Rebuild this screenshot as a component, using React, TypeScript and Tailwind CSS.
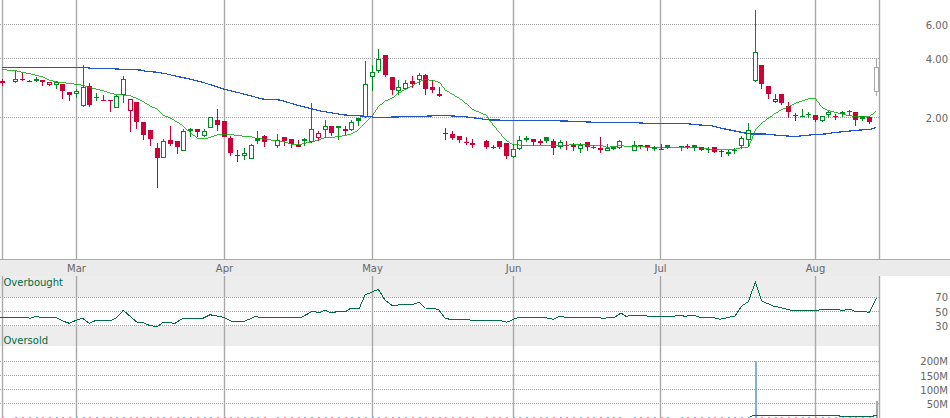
type CandleKind = 'g' | 'f' | 'r' | 'p' | 'x';
type Row = [number, number, number, number, number, CandleKind];
type Pt = [number, number];

// all numbers read off 3x crops, so each block carries its crop offset
const fromCrop = (rows: Row[], ox: number, oy: number): Row[] =>
  rows.map(([x, a, b, c, d, k]) => [x / 3 + ox, a / 3 + oy, b / 3 + oy, c / 3 + oy, d / 3 + oy, k]);
const line = (pts: Pt[], ox: number, oy: number): Pt[] => pts.map(([x, y]) => [x / 3 + ox, y / 3 + oy]);
const toPoints = (pts: Pt[]) => pts.map(([x, y]) => `${x.toFixed(1)},${y.toFixed(1)}`).join(' ');

const candles: Row[] = [
  ...fromCrop(
    [
      [7, 236, 258, 243, 248, 'r'], [46, 212, 248, 238, 245, 'g'], [68, 218, 243, 237, 240, 'r'], [89, 240, 246, 243, 245, 'r'],
      [109, 232, 246, 237, 243, 'f'], [127, 240, 258, 240, 246, 'r'], [148, 247, 258, 247, 254, 'p'], [169, 243, 267, 247, 254, 'g'],
      [187, 252, 297, 252, 273, 'r'], [208, 276, 303, 276, 285, 'r'], [229, 268, 295, 274, 281, 'g'], [250, 195, 320, 262, 317, 'g'],
      [268, 250, 321, 259, 315, 'r'], [290, 279, 303, 291, 294, 'f'], [311, 285, 303, 300, 303, 'r'], [331, 300, 336, 300, 303, 'r'],
      [349, 285, 324, 289, 323, 'g'], [370, 228, 309, 238, 285, 'g'], [391, 298, 396, 298, 332, 'p'], [409, 306, 387, 306, 366, 'r'],
      [430, 366, 420, 366, 405, 'r'], [451, 390, 438, 390, 417, 'r'], [472, 430, 564, 444, 474, 'r'], [490, 418, 474, 424, 473, 'g'],
      [511, 378, 438, 420, 432, 'r'], [532, 423, 462, 423, 441, 'r'], [550, 388, 453, 394, 452, 'g'], [571, 384, 411, 388, 393, 'f'],
      [592, 387, 411, 387, 396, 'r'], [613, 387, 411, 394, 409, 'g'], [631, 351, 384, 352, 383, 'g'], [652, 327, 393, 360, 375, 'r'],
      [673, 363, 411, 363, 411, 'r'], [691, 408, 468, 414, 459, 'r'], [712, 450, 486, 465, 468, 'r'], [733, 444, 480, 460, 467, 'g'],
      [754, 432, 477, 436, 476, 'g'], [772, 393, 432, 414, 423, 'f'], [793, 405, 441, 408, 426, 'r'], [832, 402, 444, 421, 437, 'g'],
      [853, 411, 438, 411, 423, 'r'], [874, 417, 444, 417, 432, 'r'], [895, 420, 441, 435, 441, 'r'], [913, 414, 438, 417, 423, 'f'],
      [934, 309, 429, 388, 426, 'g'], [955, 393, 423, 400, 413, 'p'],
    ],
    0,
    0,
  ),
  ...fromCrop(
    [
      [76, 270, 324, 287, 301, 'g'], [94, 288, 318, 288, 309, 'r'], [115, 288, 330, 288, 294, 'f'], [136, 288, 315, 297, 303, 'r'],
      [154, 270, 303, 276, 299, 'g'], [175, 264, 288, 264, 273, 'f'], [196, 93, 265, 163, 262, 'g'], [217, 105, 183, 127, 140, 'g'],
      [235, 57, 129, 87, 122, 'g'], [256, 75, 141, 75, 135, 'r'], [277, 141, 195, 141, 180, 'r'], [295, 150, 195, 172, 183, 'g'],
      [316, 150, 180, 160, 177, 'g'], [337, 138, 174, 153, 162, 'r'], [358, 129, 165, 136, 149, 'g'], [376, 132, 195, 135, 177, 'r'],
      [397, 150, 189, 171, 180, 'r'], [418, 171, 201, 192, 198, 'r'], [436, 294, 330, 309, 312, 'r'], [457, 303, 330, 312, 324, 'r'],
      [478, 318, 339, 318, 330, 'r'], [499, 321, 345, 336, 339, 'r'], [517, 327, 354, 339, 345, 'r'], [559, 330, 357, 333, 351, 'r'],
      [580, 345, 357, 351, 354, 'r'], [598, 333, 357, 333, 351, 'r'], [619, 339, 387, 339, 378, 'r'], [640, 345, 384, 357, 382, 'g'],
      [658, 318, 360, 331, 358, 'g'], [679, 318, 336, 324, 329, 'f'], [700, 327, 348, 327, 336, 'r'], [721, 327, 345, 333, 339, 'r'],
      [739, 321, 339, 321, 333, 'f'], [760, 327, 375, 333, 354, 'r'], [781, 330, 357, 336, 352, 'g'], [799, 333, 360, 345, 348, 'r'],
      [820, 339, 363, 345, 351, 'r'], [841, 339, 369, 346, 356, 'g'], [862, 336, 363, 336, 351, 'r'], [880, 345, 357, 350, 353, 'f'],
      [901, 321, 369, 354, 360, 'r'], [922, 342, 363, 355, 362, 'g'], [940, 351, 360, 351, 358, 'f'], [958, 330, 357, 333, 354, 'g'],
    ],
    300,
    30,
  ),
  ...fromCrop(
    [
      [13, 423, 453, 436, 452, 'g'], [31, 435, 447, 435, 439, 'r'], [52, 435, 453, 435, 442, 'r'], [73, 438, 453, 442, 447, 'f'],
      [94, 432, 450, 447, 450, 'r'], [112, 435, 447, 435, 444, 'f'], [154, 438, 453, 438, 442, 'f'], [172, 432, 447, 438, 441, 'r'],
      [193, 435, 453, 435, 445, 'f'], [214, 441, 453, 441, 450, 'r'], [235, 441, 459, 447, 450, 'f'], [253, 441, 459, 441, 456, 'r'],
      [274, 450, 471, 453, 456, 'r'], [295, 450, 468, 456, 462, 'f'], [313, 444, 462, 450, 453, 'f'], [334, 408, 447, 414, 438, 'g'],
      [355, 369, 441, 391, 419, 'g'], [376, 30, 246, 157, 243, 'g'], [394, 195, 267, 195, 252, 'r'], [415, 258, 297, 258, 282, 'r'],
      [436, 282, 309, 298, 305, 'p'], [454, 282, 315, 282, 309, 'r'], [475, 306, 354, 318, 336, 'r'], [496, 339, 363, 345, 348, 'r'],
      [517, 327, 351, 348, 351, 'f'], [535, 336, 354, 342, 345, 'f'], [556, 345, 366, 345, 360, 'r'], [577, 348, 365, 349, 362, 'g'],
      [595, 333, 354, 337, 346, 'g'], [616, 342, 360, 347, 350, 'r'], [637, 333, 351, 337, 342, 'f'], [658, 330, 348, 333, 336, 'f'],
      [676, 336, 378, 336, 360, 'r'], [697, 348, 363, 348, 357, 'f'], [718, 348, 372, 351, 366, 'r'], [739, 175, 288, 202, 277, 'x'],
    ],
    630,
    0,
  ),
];

const blueLine: Pt[] = [
  [2, 67.3], [83, 67.3], [93, 68.5], [107, 68.5], [127, 69.5], [140, 70], [146, 71.5], [155, 72], [165, 73.5], [175, 76], [190, 79], [205, 83],
  [225, 89.5], [240, 93], [255, 97], [262, 99], [280, 100], [300, 106], [320, 111], [345, 115], [370, 116.5], [375, 117.5], [416, 116.5], [443, 115.5],
  [463, 116.5], [475, 118], [490, 120], [537, 120.5], [565, 121], [600, 122.5], [630, 122.5], [651, 123.5], [685, 123.5], [700, 125], [710, 125.5],
  [720, 128], [730, 130], [745, 133], [752, 134], [765, 134], [780, 135.5], [795, 136.5], [805, 135.5], [815, 134.5], [825, 134], [835, 132.5],
  [850, 131], [860, 130], [870, 129.5], [876, 127.5],
];

const greenLine: Pt[] = [
  ...line(
    [[7, 208], [25, 211], [46, 212], [68, 217], [89, 221], [109, 226], [127, 230], [148, 240], [169, 245], [187, 248], [208, 250], [229, 253], [250, 256],
      [268, 262], [290, 268], [311, 273], [331, 279], [349, 284], [370, 285], [391, 287], [409, 295], [430, 305], [451, 318], [472, 328], [490, 345], [511, 355],
      [532, 366], [550, 378], [571, 398], [592, 414], [613, 417], [631, 412], [652, 405], [673, 402], [691, 404], [712, 406], [733, 409], [754, 410], [772, 416],
      [793, 417], [814, 420], [832, 422], [853, 426], [874, 432], [895, 435]],
    0,
    0,
  ),
  ...line(
    [[14, 340], [34, 336], [55, 330], [76, 323], [94, 322], [115, 320], [136, 316], [154, 312], [175, 300], [196, 278], [217, 258], [235, 230], [256, 213],
      [277, 204], [295, 190], [316, 178], [337, 167], [358, 155], [376, 149], [397, 151], [418, 157], [436, 180], [457, 193], [478, 205], [499, 221], [517, 238],
      [538, 247], [559, 256], [580, 285], [598, 307], [619, 332], [640, 344], [658, 345], [781, 345], [799, 347], [820, 342], [841, 342], [862, 345], [901, 345],
      [922, 352], [940, 350], [958, 347]],
    300,
    30,
  ),
  ...line(
    [[13, 440], [73, 442], [94, 442], [154, 441], [193, 442], [214, 444], [235, 447], [295, 449], [313, 448], [334, 443], [355, 441], [365, 420], [376, 390],
      [394, 370], [415, 355], [436, 340], [454, 330], [475, 320], [496, 310], [517, 303], [535, 297], [556, 295], [577, 323], [595, 332], [616, 337], [637, 342],
      [658, 347], [676, 349], [697, 350], [718, 350], [739, 333]],
    630,
    0,
  ),
];

const rsiLine: Pt[] = [
  ...line(
    [[0, 204], [40, 202], [76, 202], [90, 205], [108, 199], [125, 203], [170, 204], [190, 214], [208, 220], [230, 210], [248, 205], [268, 220], [288, 211], [328, 213],
      [348, 205], [370, 181], [410, 216], [430, 218], [448, 226], [472, 230], [490, 216], [525, 220], [550, 204], [580, 204], [605, 207], [630, 194], [670, 202],
      [692, 213], [735, 213], [765, 200], [785, 202], [860, 202], [900, 204], [935, 185]],
    0,
    250,
  ),
  ...line(
    [[0, 187], [15, 181], [35, 189], [50, 185], [78, 184], [92, 175], [118, 175], [135, 135], [175, 118], [195, 150], [218, 168], [245, 163], [280, 163], [297, 157],
      [316, 174], [340, 175], [357, 180], [375, 205], [390, 208], [448, 208], [452, 211], [540, 211], [560, 217], [595, 202], [650, 203], [670, 202], [700, 208],
      [718, 199], [750, 204], [770, 202], [830, 202], [850, 205], [885, 201], [903, 189], [918, 199], [940, 196]],
    320,
    250,
  ),
  ...line(
    [[0, 198], [30, 196], [60, 199], [130, 199], [150, 196], [165, 199], [190, 196], [210, 202], [245, 202], [270, 208], [315, 198], [335, 168], [355, 155], [376, 97],
      [395, 153], [430, 168], [485, 181], [545, 183], [590, 177], [640, 181], [660, 178], [680, 186], [695, 184], [718, 187], [740, 143]],
    630,
    250,
  ),
];

const volumeLine: Pt[] = [[750, 416.5], [754, 415.5], [839, 415.5], [840, 416.5], [873, 416.5], [874, 415.5], [877, 415.5]];

const monthLines = [2, 76, 224, 372, 513, 660, 815, 879];
const months: [string, number][] = [['Mar', 76.5], ['Apr', 224.5], ['May', 372.5], ['Jun', 513.5], ['Jul', 660.5], ['Aug', 815.5]];

const strokeColor: Record<CandleKind, string> = { g: '#008a22', f: '#008a22', r: '#cc0036', p: '#cc0036', x: '#a9a9a9' };

function Candle({ row }: { row: Row }) {
  const [cx, high, low, top, bottom, kind] = row;
  const x = Math.floor(cx);
  const color = strokeColor[kind];
  const y = Math.round(top);
  const h = Math.max(Math.round(bottom) - y, 1);
  const hollow = kind === 'g' || kind === 'p' || kind === 'x';
  return (
    <g>
      <rect x={x} y={Math.round(high)} width={1} height={Math.round(low) - Math.round(high)} fill={color} />
      {hollow ? (
        <rect x={x - 1.5} y={y + 0.5} width={4} height={h - 1} fill="#ffffff" stroke={color} strokeWidth={1} />
      ) : (
        <rect x={x - 2} y={y} width={5} height={h} fill={color} />
      )}
    </g>
  );
}

function Grid({ rows, y0, y1 }: { rows: number[]; y0: number; y1: number }) {
  return (
    <g>
      <defs>
        <pattern id={`dots-${y0}`} width={2} height={1} patternUnits="userSpaceOnUse">
          <rect width={1} height={1} fill="#a0a0a0" />
        </pattern>
      </defs>
      {rows.map((y) => (
        <rect key={y} x={0} y={y} width={879} height={1} fill={`url(#dots-${y0})`} />
      ))}
      {monthLines.map((x) => (
        <rect key={x} x={x - 0.2} y={y0} width={1.4} height={y1 - y0} fill="#a9a9a9" />
      ))}
    </g>
  );
}

function AxisLabel({ y, children }: { y: number; children: string }) {
  return (
    <text x={948} y={y} textAnchor="end" fill="#666666" fontSize={10}>
      {children}
    </text>
  );
}

export default function App() {
  return (
    <div className="flex h-[418px] w-[950px] flex-col overflow-hidden bg-white font-['DejaVu_Sans',sans-serif]">
      {/* Price */}
      <svg width={950} height={259} viewBox="0 0 950 259" className="block shrink-0">
        <Grid rows={[24, 58, 117]} y0={0} y1={259} />
        <g shapeRendering="crispEdges">
          {candles.map((row, i) => (
            <Candle key={i} row={row} />
          ))}
        </g>
        <polyline points={toPoints(blueLine)} fill="none" stroke="#2255cc" strokeWidth={1.2} shapeRendering="crispEdges" />
        <polyline points={toPoints(greenLine)} fill="none" stroke="#00a800" strokeWidth={0.8} shapeRendering="crispEdges" />
        <AxisLabel y={29}>6.00</AxisLabel>
        <AxisLabel y={63}>4.00</AxisLabel>
        <AxisLabel y={122}>2.00</AxisLabel>
      </svg>

      {/* Date strip */}
      <svg width={950} height={17} viewBox="0 260 950 16" className="block shrink-0 border-t border-[#a9a9a9] bg-[#ebebeb]">
        {months.map(([label, x]) => (
          <text key={label} x={x} y={272} textAnchor="middle" fill="#666666" fontSize={10}>
            {label}
          </text>
        ))}
      </svg>

      {/* RSI */}
      <svg width={950} height={70} viewBox="0 276 950 70" className="block shrink-0">
        <rect x={0} y={276} width={879} height={21} fill="#ededed" />
        <rect x={0} y={326} width={879} height={20} fill="#ededed" />
        <Grid rows={[297, 311, 325]} y0={276} y1={346} />
        <polyline points={toPoints(rsiLine)} fill="none" stroke="#006b45" strokeWidth={1} shapeRendering="crispEdges" />
        <text x={3.5} y={286} fill="#006b45" fontSize={10}>
          Overbought
        </text>
        <text x={3.5} y={344} fill="#006b45" fontSize={10}>
          Oversold
        </text>
        <AxisLabel y={301}>70</AxisLabel>
        <AxisLabel y={316}>50</AxisLabel>
        <AxisLabel y={330}>30</AxisLabel>
      </svg>

      {/* Volume */}
      <svg width={950} height={72} viewBox="0 346 950 72" className="block shrink-0">
        <Grid rows={[361, 375, 389, 403]} y0={346} y1={418} />
        <g shapeRendering="crispEdges">
          {candles.map(([cx, , , , , kind], i) => (
            <rect
              key={i}
              x={Math.floor(cx)}
              y={417}
              width={2}
              height={1}
              fill={kind === 'r' || kind === 'p' ? '#e98ca8' : '#80b0dc'}
            />
          ))}
          <rect x={755} y={361} width={2} height={57} fill="#80b0dc" />
          <rect x={876} y={401} width={2} height={17} fill="#a9a9a9" />
        </g>
        <polyline points={toPoints(volumeLine)} fill="none" stroke="#006b45" strokeWidth={1} shapeRendering="crispEdges" />
        <AxisLabel y={365}>200M</AxisLabel>
        <AxisLabel y={380}>150M</AxisLabel>
        <AxisLabel y={394}>100M</AxisLabel>
        <AxisLabel y={408}>50M</AxisLabel>
      </svg>
    </div>
  );
}
